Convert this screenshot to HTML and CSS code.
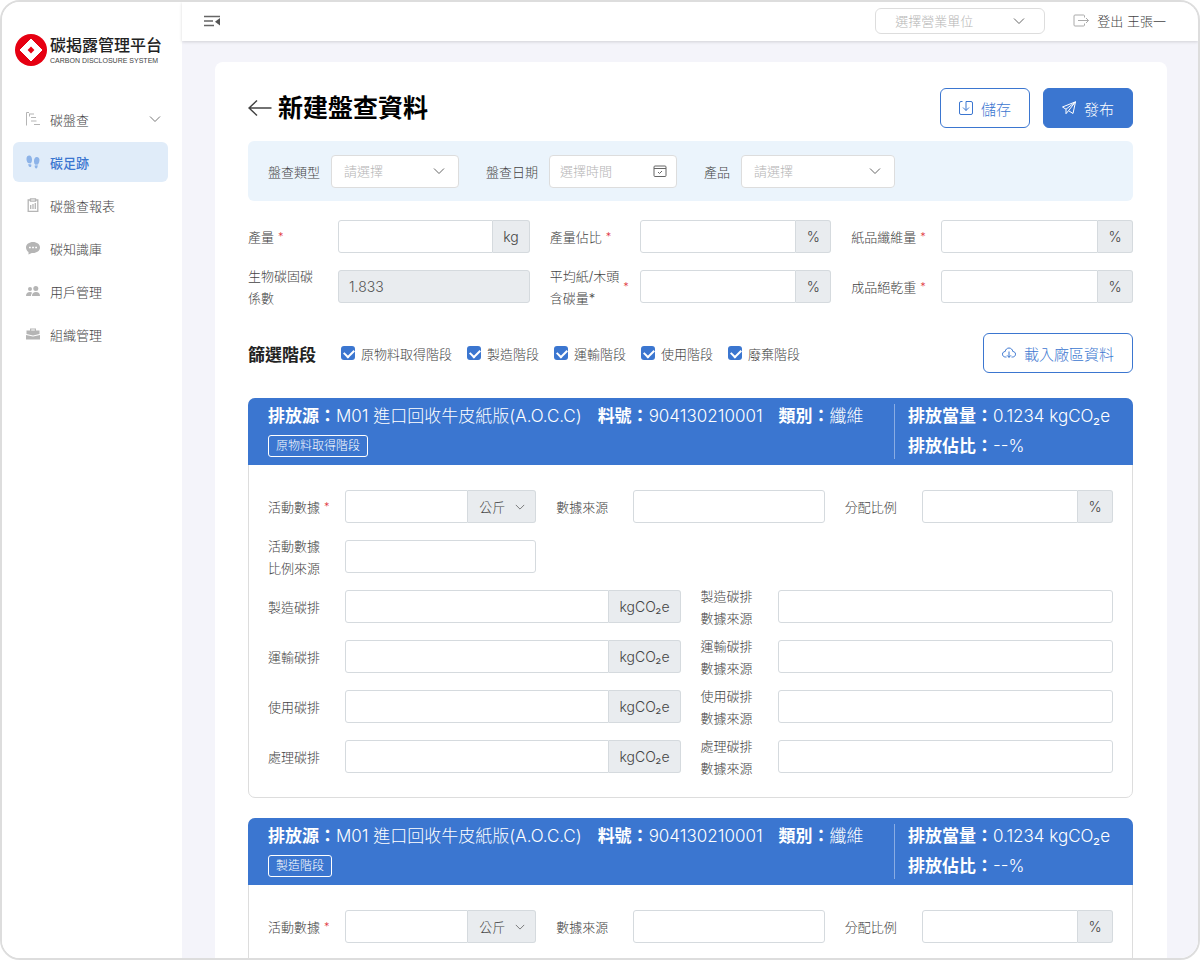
FILE: index.html
```html
<!DOCTYPE html>
<html lang="zh-Hant">
<head>
    <meta charset="UTF-8">
    <meta name="viewport" content="width=device-width, initial-scale=1.0">
    <title>碳揭露管理平台</title>
    <link rel="stylesheet" href="styles.css">
</head>
<body>
    <svg class="sprite" aria-hidden="true">
        <symbol id="chevron" viewBox="0 0 12 12"><path d="M1 3.5l5 5 5-5" fill="none" stroke="currentColor"/></symbol>
    </svg>
    <div class="app">
        <aside class="sidebar">
            <div class="logo">
                <svg width="32" height="32" viewBox="0 0 32 32">
                    <circle cx="16" cy="16" r="16" fill="#e60012"/>
                    <path d="M16 5L27 16 16 27 5 16z" fill="#fff" stroke="#fff" stroke-linejoin="round"/>
                    <path d="M16 12.6L19.4 16 16 19.4 12.6 16z" fill="#e60012"/>
                </svg>
                <div>
                    <div class="logo-name">碳揭露管理平台</div>
                    <div class="logo-sub">CARBON DISCLOSURE SYSTEM</div>
                </div>
            </div>
            <nav class="menu">
                <a href="#">
                    <svg width="14" height="14" viewBox="0 0 14 14" fill="none" stroke="currentColor"><path d="M3 .5H.5v13M3.5 1.5v3M4 2h4M5 5.5h5M5 9h5.500M8 12.500h6"/></svg>
                    碳盤查
                    <svg class="arrow" width="12" height="12"><use href="#chevron"/></svg>
                </a>
                <a href="#" class="active">
                    <svg width="14" height="14" viewBox="0 0 14 14" fill="currentColor"><path d="M3.200 .5C5 .5 6 2.400 6 4.500 6 6.200 5.700 8 4.500 8.400L2 8C.8 6.500.4 5 .5 3.500.6 1.800 1.600.5 3.200.5zM2.300 9l3 .4C5.600 11 5 12 4 12s-1.700-1.300-1.700-3zM10.800 2C12.600 2 13.500 3.500 13.500 5c0 1.500-.5 3-1.500 4.500l-2.600.2C8.200 9 8 7.500 8 6c0-2.200 1-4 2.800-4zM8.700 10.500l3-.3C11.700 12 11.200 13.500 10.200 13.500S8.500 12 8.700 10.500z"/></svg>
                    碳足跡
                </a>
                <a href="#">
                    <svg width="14" height="14" viewBox="0 0 14 14" fill="none" stroke="currentColor" stroke-width="1.300"><path d="M4.500 2H2.200v11.300h9.600V2H9.500"/><path d="M4.500 .8h5v2.400h-5zM4.700 11V7M7 11V6M9.300 11V5"/></svg>
                    碳盤查報表
                </a>
                <a href="#">
                    <svg width="14" height="14" viewBox="0 0 14 14" fill="currentColor"><path d="M7 1c3.800 0 7 2.300 7 5.500S10.800 12 7 12l-1.200-.1L2.500 13.500V11C1 10 0 8.400 0 6.500 0 3.300 3.200 1 7 1z"/><path d="M3 5.800h1.800v1.500H3zM6.100 5.800h1.800v1.500H6.100zM9.200 5.800H11v1.500H9.200z" fill="#fff"/></svg>
                    碳知識庫
                </a>
                <a href="#">
                    <svg width="14" height="14" viewBox="0 0 14 14" fill="currentColor"><circle cx="4" cy="5" r="2"/><circle cx="9.800" cy="4.500" r="2.500"/><path d="M0 12c0-2.500 1.500-4 4-4 1 0 1.700.3 2.200.8C5.300 9.700 5 10.700 5 12zM6 12c0-2.500 1.500-4 4-4s4 1.500 4 4z"/></svg>
                    用戶管理
                </a>
                <a href="#">
                    <svg width="14" height="14" viewBox="0 0 14 14" fill="currentColor"><path d="M4 3.500V1.500h6v2h3.500V7L7 8.500.5 7V3.500zM5.200 3.500h3.600v-.9H5.200z"/><path d="M0 8l7 1.600L14 8v4.500H0z"/></svg>
                    組織管理
                </a>
            </nav>
        </aside>
        <div class="content">
            <header class="topbar">
                <button type="button" class="collapse" aria-label="收合選單">
                    <svg width="18" height="12" viewBox="0 0 18 12"><path d="M1 1.500h16M1 6h9M1 10.500h10" fill="none" stroke="#666" stroke-width="1.400"/><path d="M17 3v7.500L12 6.800z" fill="#555"/></svg>
                </button>
                <div class="select unit-select">
                    <select aria-label="選擇營業單位"><option>選擇營業單位</option></select>
                    <svg width="12" height="12"><use href="#chevron"/></svg>
                </div>
                <a href="#" class="logout">
                    <svg width="16" height="13" viewBox="0 0 16 13" fill="none" stroke="#aaa"><path d="M11.500 3.500V2q0-1-1-1H2Q1 1 1 2v9q0 1 1 1h8.500q1 0 1-1V9.500M5 6.500h10.500M13 4l2.500 2.500L13 9"/></svg>
                    登出 王張一
                </a>
            </header>
            <main>
                <form class="panel">
                    <div class="title-row">
                        <a href="#" class="back" aria-label="返回">
                            <svg width="24" height="18" viewBox="0 0 24 18" fill="none" stroke="#444" stroke-width="1.500"><path d="M23.500 9H1M9 1.500L1 9l8 7.500"/></svg>
                        </a>
                        <h1>新建盤查資料</h1>
                        <button type="button" class="btn">
                            <svg width="14" height="14" viewBox="0 0 14 14" fill="none" stroke="currentColor"><path d="M3.500.5H2Q.5.500.5 2v10q0 1.500 1.500 1.500h10q1.500 0 1.500-1.500V2Q13.500.5 12 .5H7v9M4 6.500l3 3 3-3"/></svg>
                            儲存
                        </button>
                        <button type="button" class="btn primary">
                            <svg width="14" height="14" viewBox="0 0 14 14" fill="none" stroke="currentColor" stroke-linejoin="round"><path d="M13.500.8L.5 6l3.500 2.200L13.500.8 11 12.500 6.500 9.700 13.500.8M4 8.200v4.500l2.500-3"/></svg>
                            發布
                        </button>
                    </div>

                    <div class="filters">
                        <label for="type">盤查類型</label>
                        <div class="select">
                            <select id="type"><option>請選擇</option></select>
                            <svg width="12" height="12"><use href="#chevron"/></svg>
                        </div>
                        <label for="date">盤查日期</label>
                        <div class="select date">
                            <input type="text" id="date" placeholder="選擇時間">
                            <svg width="14" height="12" viewBox="0 0 14 12" fill="none" stroke="currentColor"><rect x="1" y="1" width="12" height="10.500" rx="1"/><path d="M1 3.500h12M5 7l1.500 1.500L9 6"/></svg>
                        </div>
                        <label for="product">產品</label>
                        <div class="select wide">
                            <select id="product"><option>請選擇</option></select>
                            <svg width="12" height="12"><use href="#chevron"/></svg>
                        </div>
                    </div>

                    <div class="fields basic">
                        <div class="field">
                            <label for="output">產量<i>*</i></label>
                            <div class="group"><input type="text" id="output"><span>kg</span></div>
                        </div>
                        <div class="field">
                            <label for="output-rate">產量佔比<i>*</i></label>
                            <div class="group"><input type="text" id="output-rate"><span>%</span></div>
                        </div>
                        <div class="field">
                            <label for="fiber">紙品纖維量<i>*</i></label>
                            <div class="group"><input type="text" id="fiber"><span>%</span></div>
                        </div>
                        <div class="field">
                            <label for="bio">生物碳固碳<br>係數</label>
                            <input type="text" id="bio" value="1.833" disabled>
                        </div>
                        <div class="field">
                            <label for="avg"><b>平均紙/木頭<br>含碳量*</b><i>*</i></label>
                            <div class="group"><input type="text" id="avg"><span>%</span></div>
                        </div>
                        <div class="field">
                            <label for="dry">成品絕乾重<i>*</i></label>
                            <div class="group"><input type="text" id="dry"><span>%</span></div>
                        </div>
                    </div>

                    <div class="stages">
                        <h2>篩選階段</h2>
                        <label><input type="checkbox" checked>原物料取得階段</label>
                        <label><input type="checkbox" checked>製造階段</label>
                        <label><input type="checkbox" checked>運輸階段</label>
                        <label><input type="checkbox" checked>使用階段</label>
                        <label><input type="checkbox" checked>廢棄階段</label>
                        <button type="button" class="btn">
                            <svg width="14" height="12" viewBox="0 0 14 12" fill="none" stroke="currentColor"><path d="M4.500 10H3.500C1.800 10 .5 8.900.5 7.200S1.700 4.600 3.200 4.500C3.500 2.500 5 1 7 1s3.500 1.500 3.800 3.500c1.500.1 2.700 1 2.700 2.700S12.200 10 10.500 10h-1M7 4.500v6M5 8.300l2 2 2-2"/></svg>
                            載入廠區資料
                        </button>
                    </div>

                    <section class="card">
                        <div class="card-head">
                            <div class="source">
                                <div class="info">
                                    <span><b>排放源：</b>M01 進口回收牛皮紙版(A.O.C.C)</span>
                                    <span><b>料號：</b>904130210001</span>
                                    <span><b>類別：</b>纖維</span>
                                </div>
                                <div class="tag">原物料取得階段</div>
                            </div>
                            <div class="result">
                                <div><b>排放當量：</b>0.1234 kgCO₂e</div>
                                <div><b>排放佔比：</b>--%</div>
                            </div>
                        </div>
                        <div class="card-body">
                            <div class="fields">
                                <div class="field">
                                    <label for="act1">活動數據<i>*</i></label>
                                    <div class="group">
                                        <input type="text" id="act1">
                                        <div class="select unit">
                                            <select aria-label="單位"><option>公斤</option></select>
                                            <svg width="10" height="10"><use href="#chevron"/></svg>
                                        </div>
                                    </div>
                                </div>
                                <div class="field">
                                    <label for="src1">數據來源</label>
                                    <input type="text" id="src1">
                                </div>
                                <div class="field">
                                    <label for="alloc1">分配比例</label>
                                    <div class="group"><input type="text" id="alloc1"><span>%</span></div>
                                </div>
                                <div class="field">
                                    <label for="ratio1">活動數據<br>比例來源</label>
                                    <input type="text" id="ratio1">
                                </div>
                            </div>
                            <div class="fields two">
                                <div class="field">
                                    <label for="make">製造碳排</label>
                                    <div class="group"><input type="text" id="make"><span>kgCO₂e</span></div>
                                </div>
                                <div class="field">
                                    <label for="make-src">製造碳排<br>數據來源</label>
                                    <input type="text" id="make-src">
                                </div>
                                <div class="field">
                                    <label for="ship">運輸碳排</label>
                                    <div class="group"><input type="text" id="ship"><span>kgCO₂e</span></div>
                                </div>
                                <div class="field">
                                    <label for="ship-src">運輸碳排<br>數據來源</label>
                                    <input type="text" id="ship-src">
                                </div>
                                <div class="field">
                                    <label for="use">使用碳排</label>
                                    <div class="group"><input type="text" id="use"><span>kgCO₂e</span></div>
                                </div>
                                <div class="field">
                                    <label for="use-src">使用碳排<br>數據來源</label>
                                    <input type="text" id="use-src">
                                </div>
                                <div class="field">
                                    <label for="waste">處理碳排</label>
                                    <div class="group"><input type="text" id="waste"><span>kgCO₂e</span></div>
                                </div>
                                <div class="field">
                                    <label for="waste-src">處理碳排<br>數據來源</label>
                                    <input type="text" id="waste-src">
                                </div>
                            </div>
                        </div>
                    </section>

                    <section class="card">
                        <div class="card-head">
                            <div class="source">
                                <div class="info">
                                    <span><b>排放源：</b>M01 進口回收牛皮紙版(A.O.C.C)</span>
                                    <span><b>料號：</b>904130210001</span>
                                    <span><b>類別：</b>纖維</span>
                                </div>
                                <div class="tag">製造階段</div>
                            </div>
                            <div class="result">
                                <div><b>排放當量：</b>0.1234 kgCO₂e</div>
                                <div><b>排放佔比：</b>--%</div>
                            </div>
                        </div>
                        <div class="card-body">
                            <div class="fields">
                                <div class="field">
                                    <label for="act2">活動數據<i>*</i></label>
                                    <div class="group">
                                        <input type="text" id="act2">
                                        <div class="select unit">
                                            <select aria-label="單位"><option>公斤</option></select>
                                            <svg width="10" height="10"><use href="#chevron"/></svg>
                                        </div>
                                    </div>
                                </div>
                                <div class="field">
                                    <label for="src2">數據來源</label>
                                    <input type="text" id="src2">
                                </div>
                                <div class="field">
                                    <label for="alloc2">分配比例</label>
                                    <div class="group"><input type="text" id="alloc2"><span>%</span></div>
                                </div>
                                <div class="field">
                                    <label for="ratio2">活動數據<br>比例來源</label>
                                    <input type="text" id="ratio2">
                                </div>
                            </div>
                        </div>
                    </section>
                </form>
            </main>
        </div>
    </div>
</body>
</html>
```
FILE: styles.css
```css
* {
    box-sizing: border-box;
}
body {
    margin: 0;
    font-family: Inter, "Noto Sans CJK TC", sans-serif;
    font-size: 13px;
    font-weight: 300;
    color: #444;
    background: #fff;
}
h1, h2 {
    margin: 0;
    font-weight: bold;
}
a {
    color: inherit;
    text-decoration: none;
}
input, select, button {
    font: inherit;
    color: inherit;
}
svg {
    display: block;
    flex: none;
}
.sprite {
    display: none;
}
.app {
    display: flex;
    height: 100vh;
    border: 2px solid #ddd;
    border-radius: 20px;
    overflow: hidden;
}

/* sidebar */
.sidebar {
    width: 180px;
    flex: none;
    background: #fff;
}
.logo {
    display: flex;
    align-items: center;
    gap: 3px;
    padding: 32px 0 0 13px;
}
.logo-name {
    font-size: 16px;
    line-height: 22px;
    font-weight: 500;
    color: #222;
    white-space: nowrap;
}
.logo-sub {
    font-family: "Liberation Sans", sans-serif;
    font-size: 7px;
    line-height: 10px;
    font-weight: normal;
    color: #444;
    white-space: nowrap;
}
.menu {
    display: flex;
    flex-direction: column;
    gap: 3px;
    padding: 33px 14px 0 11px;
}
.menu a {
    display: flex;
    align-items: center;
    gap: 10px;
    height: 40px;
    padding: 0 7px 0 13px;
    border-radius: 6px;
}
.menu svg {
    color: #b5b5b5;
}
.menu .arrow {
    margin-left: auto;
    color: #777;
}
.menu .active {
    background: #e0ecf9;
    color: #3b76d0;
    font-weight: 500;
}
.menu .active svg {
    color: #8db3e8;
}

/* top bar */
.content {
    flex: 1;
    min-width: 0;
    display: flex;
    flex-direction: column;
    background: #f4f4fa;
}
.topbar {
    display: flex;
    align-items: center;
    height: 39px;
    flex: none;
    padding: 0 32px 2px 21px;
    background: #fff;
    box-shadow: 0 1px 3px rgba(0, 0, 0, 0.15);
    z-index: 1;
}
.collapse {
    padding: 0;
    border: none;
    background: none;
}
.select {
    position: relative;
    width: 128px;
}
.select select,
.select input {
    width: 100%;
    height: 33px;
    padding: 0 12px;
    border: 1px solid #ddd;
    border-radius: 4px;
    background: #fff;
    color: #b5b5b5;
    appearance: none;
}
.select svg {
    position: absolute;
    top: 50%;
    right: 14px;
    transform: translateY(-50%);
    color: #666;
    pointer-events: none;
}
.select.date input {
    padding: 0 10px;
}
.select.date svg {
    right: 10px;
}
.unit-select {
    width: 170px;
    margin-left: auto;
}
.unit-select select {
    height: 26px;
    padding: 0 19px;
    border-radius: 6px;
    display: block;
}
.unit-select svg {
    right: 20px;
}
.logout {
    display: flex;
    align-items: center;
    gap: 8px;
    margin-left: 28px;
}

/* page */
main {
    flex: 1;
    min-height: 0;
    overflow-y: auto;
    scrollbar-width: none;
    padding: 21px 31px 20px 33px;
}
.panel {
    padding: 26px 34px 26px 33px;
    border-radius: 8px;
    background: #fff;
}
.title-row {
    display: flex;
    align-items: center;
}
.back {
    margin-right: 6px;
}
h1 {
    margin-right: auto;
    font-size: 25px;
    line-height: 36px;
    color: #000;
}
.btn {
    display: flex;
    align-items: center;
    gap: 8px;
    height: 40px;
    padding: 0 18px;
    border: 1px solid #3b76d0;
    border-radius: 6px;
    background: #fff;
    color: #3b76d0;
    font-size: 15px;
    font-weight: 300;
    cursor: pointer;
}
.btn.primary {
    margin-left: 13px;
    background: #3b76d0;
    color: #fff;
}
.filters {
    display: flex;
    align-items: center;
    height: 60px;
    margin-top: 13px;
    padding: 0 20px;
    border-radius: 6px;
    background: #ebf4fc;
}
.filters label {
    margin-right: 11px;
}
.filters .select {
    margin-right: 27px;
}
.filters .wide {
    width: 154px;
}
::placeholder {
    color: #b5b5b5;
}

/* form fields */
.fields {
    display: grid;
    grid-template-columns: repeat(3, 1fr);
    gap: 17px 20px;
}
.fields.two {
    grid-template-columns: repeat(2, 1fr);
    margin-top: 17px;
}
.basic {
    margin-top: 19px;
}
.field {
    display: flex;
    align-items: center;
    height: 33px;
}
.field label {
    display: flex;
    align-items: center;
    width: 77px;
    flex: none;
    line-height: 22px;
    white-space: nowrap;
}
.basic label {
    width: 90px;
}
.field label b {
    font-weight: 300;
}
.field label i {
    margin-left: 4px;
    font-style: normal;
    font-size: 11px;
    color: #e0323c;
}
.field input {
    flex: 1;
    min-width: 0;
    width: 100%;
    height: 33px;
    padding: 0 10px;
    border: 1px solid #d5dade;
    border-radius: 3px;
    background: #fff;
    font-size: 14px;
}
.field input:disabled {
    background: #e9ecef;
    color: #555;
}
.group {
    display: flex;
    flex: 1;
    min-width: 0;
}
.field .group input {
    border-radius: 3px 0 0 3px;
}
.group span {
    min-width: 35px;
    padding: 0 10px;
    border: 1px solid #d5dade;
    border-left: none;
    border-radius: 0 3px 3px 0;
    background: #e9ecef;
    font-size: 14px;
    line-height: 31px;
    text-align: center;
}
.unit {
    width: 68px;
    flex: none;
}
.unit select {
    padding: 0 11px;
    border: 1px solid #d5dade;
    border-left: none;
    border-radius: 0 3px 3px 0;
    background: #e9ecef;
    color: #444;
}
.unit svg {
    right: 11px;
}

/* stage filter */
.stages {
    display: flex;
    align-items: center;
    margin-top: 30px;
}
h2 {
    margin-right: 25px;
    font-size: 17px;
    color: #222;
}
.stages label {
    display: flex;
    align-items: center;
    gap: 6px;
    margin-right: 15px;
}
.stages input {
    position: relative;
    width: 14px;
    height: 14px;
    margin: 0;
    border-radius: 3px;
    background: #3b76d0;
    appearance: none;
}
.stages input:not(:checked) {
    border: 1px solid #ccc;
    background: #fff;
}
.stages input:checked::after {
    content: "";
    position: absolute;
    left: 3px;
    top: 3px;
    width: 8px;
    height: 5px;
    border: solid #fff;
    border-width: 0 0 2px 2px;
    transform: rotate(-45deg);
}
.stages .btn {
    margin-left: auto;
}

/* emission cards */
.card {
    margin-top: 25px;
    border: 1px solid #ddd;
    border-radius: 7px;
}
.card + .card {
    margin-top: 20px;
}
.card-head {
    display: flex;
    height: 67px;
    margin: -1px -1px 0;
    padding: 6px 20px;
    border-radius: 7px 7px 0 0;
    background: #3b76d0;
    color: #fff;
    font-size: 17px;
    line-height: 24px;
    white-space: nowrap;
}
.card-head b {
    font-weight: bold;
}
.source {
    flex: 1;
}
.info {
    display: flex;
    gap: 16px;
}
.tag {
    display: inline-block;
    margin-top: 7px;
    padding: 0 7px;
    border: 1px solid #fff;
    border-radius: 3px;
    font-size: 12px;
    line-height: 20px;
    vertical-align: top;
}
.result {
    width: 219px;
    padding-left: 13px;
    border-left: 1px solid rgba(255, 255, 255, 0.4);
}
.result div + div {
    margin-top: 6px;
}
.card-body {
    padding: 25px 19px 24px;
}
```
